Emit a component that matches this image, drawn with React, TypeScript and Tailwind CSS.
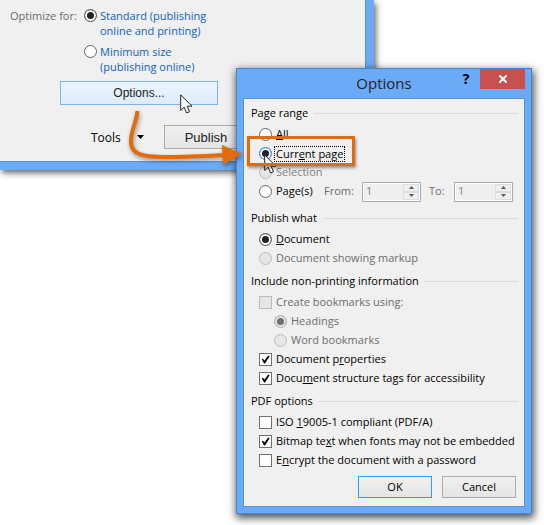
import type { ComponentProps, ReactNode } from "react";
import { X } from "lucide-react";
import clsx from "clsx";

const Radio = ({ className, ...props }: ComponentProps<"input">) => (
  <input
    type="radio"
    className={clsx(
      "size-[13px] shrink-0 appearance-none rounded-full border bg-white checked:bg-[#222] checked:shadow-[inset_0_0_0_2px_white] disabled:border-[#bcbcbc] disabled:bg-[#e6e6e6] disabled:checked:bg-[#707070] disabled:checked:shadow-[inset_0_0_0_2px_#e6e6e6]",
      className ?? "border-[#666]"
    )}
    {...props}
  />
);

const Tick = (props: ComponentProps<"input">) => (
  <span className="relative grid size-[13px] shrink-0">
    <input
      type="checkbox"
      className="peer size-[13px] appearance-none border border-[#707070] bg-white disabled:border-[#bcbcbc] disabled:bg-[#e6e6e6]"
      {...props}
    />
    <svg viewBox="0 0 9 9" className="pointer-events-none absolute inset-0.5 hidden size-[9px] peer-checked:block">
      <path d="M.8 4.300L2 3.800L3.500 5.600L7.200.600L8.600 1.200L4 8.400H3Z" />
    </svg>
  </span>
);

const Row = ({ children, className }: { children: ReactNode; className?: string }) => (
  <label className={clsx("flex h-[19px] items-center gap-1 pl-2 whitespace-nowrap", className)}>{children}</label>
);

const Section = ({ title, children }: { title: string; children: ReactNode }) => (
  <fieldset className="mb-0.5">
    <legend className="flex h-[23px] w-full items-center gap-1.5 whitespace-nowrap">
      {title}
      <span className="h-px flex-1 bg-[#dadada]" />
    </legend>
    {children}
  </fieldset>
);

const Spinner = ({ label }: { label: string }) => (
  <div className="flex h-5 w-[59px] border border-[#ababb3] bg-white p-px">
    <input
      aria-label={label}
      defaultValue="1"
      disabled
      className="min-w-0 flex-1 bg-[#efefef] px-0.5 text-[#8a7f8a]"
    />
    <div className="flex w-4 flex-col">
      {["M0 3L2.500 0L5 3Z", "M0 0L2.500 3L5 0Z"].map((d, i) => (
        <button
          key={d}
          type="button"
          disabled
          aria-label={i === 0 ? `${label} up` : `${label} down`}
          className="flex flex-1 items-center justify-center border border-[#dcdcdc] bg-[#efefef]"
        >
          <svg width="5" height="3" viewBox="0 0 5 3" fill="#555">
            <path d={d} />
          </svg>
        </button>
      ))}
    </div>
  </div>
);

const Cursor = ({ className }: { className: string }) => (
  <svg viewBox="0 0 13 20" className={clsx("pointer-events-none absolute h-5 w-[13px]", className)}>
    <path d="M.7.900V16.400L4.200 13.200L6.600 18.900L9.500 17.700L7.100 12.200H12Z" fill="#fff" stroke="#222" />
  </svg>
);

const PublishPane = () => (
  <section className="w-[374px] border-r-8 border-b-8 border-[#6aaaf7] bg-[#f0f0f0] shadow-[2px_3px_6px_rgba(0,0,0,0.6)]">
    <div className="h-[162px] border-r border-b border-[#5794d6] pt-2 text-xs leading-[15px]">
      <div className="flex gap-2 pl-2.5 text-[11px] text-[#0b62c4]">
        <span className="w-[66px] whitespace-nowrap text-[#6a6a6a]">Optimize for:</span>
        <div className="flex flex-col gap-1.5">
          <label className="flex gap-[3px]">
            <Radio name="size" defaultChecked className="mt-px border-[#666]" />
            <span>
              Standard (publishing
              <br />
              online and printing)
            </span>
          </label>
          <label className="flex gap-[3px]">
            <Radio name="size" className="mt-px border-[#666]" />
            <span>
              Minimum size
              <br />
              (publishing online)
            </span>
          </label>
        </div>
      </div>
      <button
        type="button"
        className="mt-[7px] ml-[60px] block h-6 w-[158px] border border-[#7eb4ea] bg-linear-to-b from-[#ecf4fc] to-[#dcecfc] font-[family-name:'Liberation_Sans',sans-serif] text-xs text-[#222]"
      >
        Options...
      </button>
      <div className="mt-5 flex items-center pl-[91px]">
        <button type="button" className="flex w-[73px] items-center gap-4 text-black">
          Tools
          <svg width="7" height="4" viewBox="0 0 7 4">
            <path d="M0 0H7L3.500 4Z" />
          </svg>
        </button>
        <button
          type="button"
          className="h-6 w-[84px] border border-[#acacac] bg-linear-to-b from-[#f0f0f0] to-[#e5e5e5] font-[family-name:'Liberation_Sans',sans-serif] text-[13px] text-[#222]"
        >
          Publish
        </button>
      </div>
    </div>
  </section>
);

const OptionsDialog = () => (
  <section
    role="dialog"
    aria-labelledby="options-title"
    className="absolute top-[68px] left-[236px] w-[296px] border border-[#4c86c6] bg-[#6aaaf7] px-1.5 pb-1.5 text-[11px] text-black shadow-[1px_3px_8px_1px_rgba(0,0,0,0.7)]"
  >
    <header className="relative flex h-[29px] items-center justify-center">
      <h1 id="options-title" className="text-[15px] text-[#222]">
        Options
      </h1>
      <div className="absolute top-0 right-0 flex h-5">
        <button type="button" className="w-7 text-sm font-bold">
          ?
        </button>
        <button
          type="button"
          aria-label="Close"
          className="flex w-[45px] items-center justify-center bg-[#c75050] text-white"
        >
          <X strokeWidth={4} className="size-3" />
        </button>
      </div>
    </header>

    <div className="border border-[#5794d6] bg-[#f0f0f0] pt-[3px] pr-1.5 pb-2 pl-[7px]">
      <Section title="Page range">
        <Row>
          <Radio name="range" />
          <span>
            <u>A</u>ll
          </span>
        </Row>
        <Row>
          <Radio name="range" defaultChecked className="border-[#3399ff]" />
          <span className="-ml-0.5 border border-dotted border-black px-px leading-[14px]">
            Curr<u>e</u>nt page
          </span>
        </Row>
        <Row className="text-[#838383]">
          <Radio name="range" disabled />
          Selection
        </Row>
        <div className="mb-1 flex h-[19px] items-center text-[#6d6d6d]">
          <Row className="w-[73px] text-black">
            <Radio name="range" />
            <span>
              Pa<u>g</u>e(s)
            </span>
          </Row>
          <span className="w-[38px]">From:</span>
          <Spinner label="From" />
          <span className="w-[33px] pl-2">To:</span>
          <Spinner label="To" />
        </div>
      </Section>

      <Section title="Publish what">
        <Row>
          <Radio name="what" defaultChecked />
          <span>
            <u>D</u>ocument
          </span>
        </Row>
        <Row className="text-[#6d6d6d]">
          <Radio name="what" disabled />
          Document showing markup
        </Row>
      </Section>

      <Section title="Include non-printing information">
        <Row className="text-[#6d6d6d]">
          <Tick disabled />
          Create bookmarks using:
        </Row>
        <Row className="ml-[15px] text-[#6d6d6d]">
          <Radio name="bookmarks" defaultChecked disabled />
          Headings
        </Row>
        <Row className="ml-[15px] text-[#6d6d6d]">
          <Radio name="bookmarks" disabled />
          Word bookmarks
        </Row>
        <Row>
          <Tick defaultChecked />
          <span>
            Document p<u>r</u>operties
          </span>
        </Row>
        <Row>
          <Tick defaultChecked />
          <span>
            Docu<u>m</u>ent structure tags for accessibility
          </span>
        </Row>
      </Section>

      <Section title="PDF options">
        <Row>
          <Tick />
          <span>
            ISO <u>1</u>9005-1 compliant (PDF/A)
          </span>
        </Row>
        <Row>
          <Tick defaultChecked />
          <span>
            Bitmap te<u>x</u>t when fonts may not be embedded
          </span>
        </Row>
        <Row>
          <Tick />
          <span>
            E<u>n</u>crypt the document with a password
          </span>
        </Row>
      </Section>

      <div className="mt-1.5 flex justify-end gap-2.5 pr-0.5">
        <button type="button" className="h-[22px] w-[74px] border border-[#3399ff] bg-linear-to-b from-[#f0f0f0] to-[#e5e5e5]">
          OK
        </button>
        <button type="button" className="h-[22px] w-[74px] border border-[#acacac] bg-linear-to-b from-[#f0f0f0] to-[#e5e5e5]">
          Cancel
        </button>
      </div>
    </div>
  </section>
);

const App = () => (
  <main className="relative min-h-[525px] overflow-hidden bg-white font-[family-name:'Open_Sans',sans-serif]">
    <PublishPane />
    <OptionsDialog />
    <Cursor className="top-[94px] left-[180px]" />
    <Cursor className="top-[154px] left-[264px]" />

    {/* Callout: arrow from the button to the highlighted choice */}
    <div className="pointer-events-none absolute top-[136px] left-[247px] h-[30px] w-[108px] border-3 border-[#e36c0a] shadow-[1px_2px_3px_rgba(0,0,0,0.4)]" />
    <svg
      viewBox="0 0 120 64"
      className="pointer-events-none absolute top-[106px] left-[124px] h-16 w-[120px] drop-shadow-[1px_2px_2px_rgba(0,0,0,0.4)]"
    >
      <path d="M13.500 5C12 18 6 26 7 37C8 48 18 51 40 51C62 51 82 50 100 49" fill="none" stroke="#e36c0a" strokeWidth="4" />
      <path d="M98 39L118 48L99 59Z" fill="#e36c0a" />
    </svg>
  </main>
);

export default App;
